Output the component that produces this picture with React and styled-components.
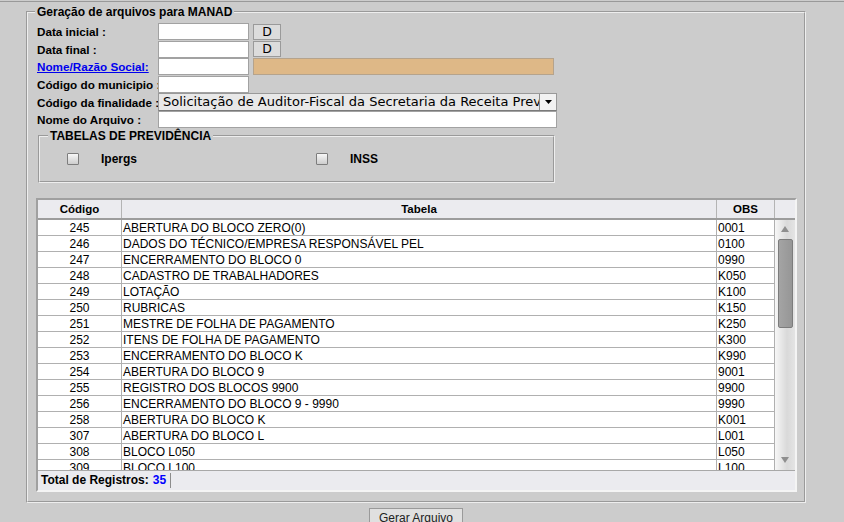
import React from 'react';
import styled, { createGlobalStyle } from 'styled-components';

const GlobalStyle = createGlobalStyle`
  body {
    margin: 0;
    background: #cccccc;
    font-family: "Liberation Sans", Arial, sans-serif;
    color: #000;
  }
`;

const Page = styled.div`
  margin-top: 1px;
  border-top: 1px solid #999;
  height: 520px;
  overflow: hidden;
`;

const Frame = styled.fieldset`
  margin: 3px 38px 0 26px;
  padding: 4px 7px 9px 9px;
  border: 2px groove #eeeeee;
  min-width: 0;
`;

const FrameLegend = styled.legend`
  margin-left: -2px;
  padding: 0 2px;
  font-size: 12px;
  font-weight: bold;
  line-height: 14px;
`;

const FormGrid = styled.div`
  display: grid;
  grid-template-columns: 121px auto;
  grid-auto-rows: 17.6px;
  align-items: center;
`;

const Label = styled.span`
  font-size: 11.7px;
  font-weight: bold;
  white-space: nowrap;
`;

const LinkLabel = styled.a`
  font-size: 11.7px;
  font-weight: bold;
  color: #0000ee;
  text-decoration: underline;
  white-space: nowrap;
`;

const Line = styled.div`
  display: flex;
  align-items: center;
  gap: 4px;
`;

const Field = styled.div`
  box-sizing: border-box;
  width: ${p => p.$width}px;
  height: 17px;
  background: #fff;
  border: 1px solid #a2a2a2;
`;

const SmallButton = styled.button`
  box-sizing: border-box;
  width: 28px;
  height: 16px;
  padding: 0;
  background: #dcdcdc;
  border: 1px solid #9a9a9a;
  font-family: "DejaVu Sans", sans-serif;
  font-size: 12.5px;
  line-height: 14px;
  color: #000;
`;

const NameBox = styled.div`
  box-sizing: border-box;
  width: 301px;
  height: 17px;
  background: #deb887;
  border: 1px solid #b5a38c;
`;

const SelectBox = styled.div`
  box-sizing: border-box;
  display: flex;
  width: 399px;
  height: 18px;
  background: #e8e8e8;
  border: 1px solid #999;
  border-bottom-color: #7a7a7a;
`;

const SelectText = styled.span`
  flex: 1;
  overflow: hidden;
  white-space: nowrap;
  padding-left: 4px;
  font-family: "DejaVu Sans", sans-serif;
  font-size: 13px;
  line-height: 16px;
`;

const SelectArrow = styled.span`
  box-sizing: border-box;
  width: 17px;
  display: flex;
  align-items: center;
  justify-content: center;
  background: #f2f2f2;
  border-left: 1px solid #8a8a8a;
`;

const Group = styled.fieldset`
  box-sizing: border-box;
  width: 517px;
  margin: 0 0 0 1px;
  padding: 8px 8px 14px 8px;
  border: 2px groove #eeeeee;
`;

const GroupLegend = styled.legend`
  padding: 0 2px;
  font-size: 12px;
  font-weight: bold;
  line-height: 14px;
`;

const CheckRow = styled.div`
  display: grid;
  grid-template-columns: 249px auto;
  padding-left: 19px;
  height: 16px;
  align-items: center;
`;

const CheckItem = styled.label`
  display: flex;
  align-items: center;
  gap: 22px;
  font-size: 12px;
  font-weight: bold;
`;

const Box = styled.span`
  box-sizing: border-box;
  width: 12px;
  height: 12px;
  border: 1px solid #7d7d7d;
  border-radius: 1px;
  background: linear-gradient(#f7f7f7, #cdcdcd);
`;

const TableBox = styled.div`
  box-sizing: border-box;
  width: 761px;
  margin: 15px 0 0 -1px;
  border: 2px inset #f4f4f4;
  background: #fff;
`;

const HeadRow = styled.div`
  display: grid;
  grid-template-columns: 84px 595px 58px 20px;
  height: 18px;
  background: #ebebef;
  border-bottom: 2px solid #9c9c9c;
`;

const HeadCell = styled.div`
  display: flex;
  align-items: center;
  justify-content: center;
  font-size: 11.5px;
  font-weight: bold;
  border-right: ${p => (p.$last ? 'none' : '1px solid #b4b4b4')};
`;

const BodyArea = styled.div`
  display: flex;
  height: 250px;
  overflow: hidden;
`;

const Rows = styled.div`
  width: 737px;
`;

const Row = styled.div`
  display: grid;
  grid-template-columns: 84px 595px 58px;
  height: 16px;
  border-bottom: 1px solid #b0b0b0;
  box-sizing: border-box;
`;

const Cell = styled.div`
  font-size: 12px;
  line-height: 16px;
  white-space: nowrap;
  overflow: hidden;
  text-align: ${p => (p.$center ? 'center' : 'left')};
  padding-left: ${p => (p.$center ? 0 : 1)}px;
  border-right: 1px solid #b0b0b0;
`;

const ScrollTrack = styled.div`
  width: 20px;
  display: flex;
  flex-direction: column;
  align-items: center;
  background: linear-gradient(to right, #f7f7f7, #d9d9d9 60%, #e4e4e4);
`;

const ScrollCap = styled.div`
  height: 19px;
  width: 100%;
  display: flex;
  align-items: center;
  justify-content: center;
`;

const Thumb = styled.div`
  box-sizing: border-box;
  width: 15px;
  height: 89px;
  background: linear-gradient(to right, #a4a4a4, #969696);
  border: 1px solid #7c7c7c;
  border-radius: 2px;
`;

const ScrollSpace = styled.div`
  flex: 1;
`;

const Footer = styled.div`
  display: flex;
  align-items: center;
  height: 19px;
  padding-left: 3px;
  background: #ebebef;
  border-top: 1px solid #a8a8a8;
  font-size: 12px;
  font-weight: bold;
`;

const Count = styled.span`
  color: #0000ff;
  margin-left: 4px;
`;

const Divider = styled.span`
  width: 0;
  height: 15px;
  margin-left: 4px;
  border-left: 1px solid #8c8c8c;
`;

const Actions = styled.div`
  display: flex;
  justify-content: center;
  margin: 5px 38px 0 26px;
`;

const ActionButton = styled.button`
  height: 21px;
  padding: 0 9px;
  background: #e0e0e0;
  border: 1px solid #9a9a9a;
  font-family: "Liberation Sans", Arial, sans-serif;
  font-size: 12px;
  color: #222;
`;

const Triangle = ({ up }) => (
  <svg width="8" height="6" viewBox="0 0 8 6">
    <polygon points={up ? '4,0 8,6 0,6' : '0,0 8,0 4,6'} fill="#8e8e8e" />
  </svg>
);

const rows = [
  ['245', 'ABERTURA DO BLOCO ZERO(0)', '0001'],
  ['246', 'DADOS DO TÉCNICO/EMPRESA RESPONSÁVEL PEL', '0100'],
  ['247', 'ENCERRAMENTO DO BLOCO 0', '0990'],
  ['248', 'CADASTRO DE TRABALHADORES', 'K050'],
  ['249', 'LOTAÇÃO', 'K100'],
  ['250', 'RUBRICAS', 'K150'],
  ['251', 'MESTRE DE FOLHA DE PAGAMENTO', 'K250'],
  ['252', 'ITENS DE FOLHA DE PAGAMENTO', 'K300'],
  ['253', 'ENCERRAMENTO DO BLOCO K', 'K990'],
  ['254', 'ABERTURA DO BLOCO 9', '9001'],
  ['255', 'REGISTRO DOS BLOCOS 9900', '9900'],
  ['256', 'ENCERRAMENTO DO BLOCO 9 - 9990', '9990'],
  ['258', 'ABERTURA DO BLOCO K', 'K001'],
  ['307', 'ABERTURA DO BLOCO L', 'L001'],
  ['308', 'BLOCO L050', 'L050'],
  ['309', 'BLOCO L100', 'L100'],
];

const App = () => {
  return (
    <Page>
      <GlobalStyle />
      <Frame>
        <FrameLegend>Geração de arquivos para MANAD</FrameLegend>
        <FormGrid>
          <Label>Data inicial :</Label>
          <Line>
            <Field $width={91} />
            <SmallButton>D</SmallButton>
          </Line>
          <Label>Data final :</Label>
          <Line>
            <Field $width={91} />
            <SmallButton>D</SmallButton>
          </Line>
          <LinkLabel href="#">Nome/Razão Social:</LinkLabel>
          <Line>
            <Field $width={91} />
            <NameBox />
          </Line>
          <Label>Código do municipio :</Label>
          <Line>
            <Field $width={91} />
          </Line>
          <Label>Código da finalidade :</Label>
          <Line>
            <SelectBox>
              <SelectText>Solicitação de Auditor-Fiscal da Secretaria da Receita Previdenciária</SelectText>
              <SelectArrow>
                <svg width="7" height="4" viewBox="0 0 7 4">
                  <polygon points="0,0 7,0 3.5,4" fill="#000" />
                </svg>
              </SelectArrow>
            </SelectBox>
          </Line>
          <Label>Nome do Arquivo :</Label>
          <Line>
            <Field $width={399} />
          </Line>
        </FormGrid>

        <Group>
          <GroupLegend>TABELAS DE PREVIDÊNCIA</GroupLegend>
          <CheckRow>
            <CheckItem><Box />Ipergs</CheckItem>
            <CheckItem><Box />INSS</CheckItem>
          </CheckRow>
        </Group>

        <TableBox>
          <HeadRow>
            <HeadCell>Código</HeadCell>
            <HeadCell>Tabela</HeadCell>
            <HeadCell>OBS</HeadCell>
            <HeadCell $last />
          </HeadRow>
          <BodyArea>
            <Rows>
              {rows.map(([code, name, obs]) => (
                <Row key={code}>
                  <Cell $center>{code}</Cell>
                  <Cell>{name}</Cell>
                  <Cell>{obs}</Cell>
                </Row>
              ))}
            </Rows>
            <ScrollTrack>
              <ScrollCap><Triangle up /></ScrollCap>
              <Thumb />
              <ScrollSpace />
              <ScrollCap><Triangle /></ScrollCap>
            </ScrollTrack>
          </BodyArea>
          <Footer>
            Total de Registros:<Count>35</Count>
            <Divider />
          </Footer>
        </TableBox>
      </Frame>
      <Actions>
        <ActionButton>Gerar Arquivo</ActionButton>
      </Actions>
    </Page>
  );
};

export default App;
